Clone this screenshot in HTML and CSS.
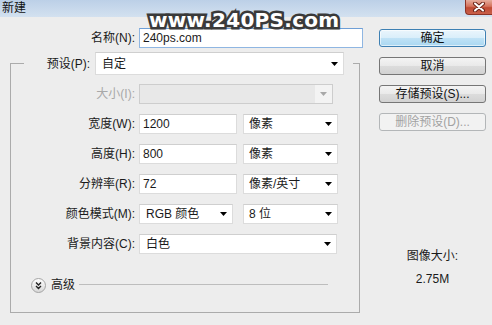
FILE: index.html
```html
<!DOCTYPE html>
<html lang="zh-CN">
<head>
<meta charset="utf-8">
<title>新建</title>
<link rel="stylesheet" href="styles.css">
</head>
<body>
<div class="dialog">
  <div class="titlebar">
    <span class="title">新建</span>
    <div class="close">
      <svg width="14" height="10" viewBox="0 0 14 10">
        <path d="M3 1.5 L11 8.5 M11 1.5 L3 8.5" stroke="#6a2418" stroke-width="4" stroke-linecap="round"/>
        <path d="M3 1.5 L11 8.5 M11 1.5 L3 8.5" stroke="#ffffff" stroke-width="2" stroke-linecap="round"/>
      </svg>
    </div>
  </div>
  <div class="content">
    <div class="main">
      <div class="name-row">
        <span class="lbl name-lbl">名称(N):</span>
        <div class="field focus name-input">240ps.com</div>
      </div>
      <fieldset class="group">
        <legend class="preset">
          <span class="lbl preset-lbl">预设(P):</span>
          <div class="field select preset-select"><span>自定</span><svg class="arrow" width="7" height="4" viewBox="0 0 7 4"><polygon points="0,0 7,0 3.5,4" fill="#000"/></svg></div>
        </legend>
        <div class="fields">
          <span class="lbl disabled">大小(I):</span>
          <div class="ctrls">
            <div class="field select dis-select"><span></span><span class="dis-arrow"><svg width="7" height="4" viewBox="0 0 7 4"><polygon points="0,0 7,0 3.5,4" fill="#a8a8a8"/></svg></span></div>
          </div>

          <span class="lbl">宽度(W):</span>
          <div class="ctrls gap6">
            <div class="field num">1200</div>
            <div class="field select unit"><span>像素</span><svg class="arrow" width="7" height="4" viewBox="0 0 7 4"><polygon points="0,0 7,0 3.5,4" fill="#000"/></svg></div>
          </div>

          <span class="lbl">高度(H):</span>
          <div class="ctrls gap6">
            <div class="field num">800</div>
            <div class="field select unit"><span>像素</span><svg class="arrow" width="7" height="4" viewBox="0 0 7 4"><polygon points="0,0 7,0 3.5,4" fill="#000"/></svg></div>
          </div>

          <span class="lbl">分辨率(R):</span>
          <div class="ctrls gap6">
            <div class="field num">72</div>
            <div class="field select unit"><span>像素/英寸</span><svg class="arrow" width="7" height="4" viewBox="0 0 7 4"><polygon points="0,0 7,0 3.5,4" fill="#000"/></svg></div>
          </div>

          <span class="lbl">颜色模式(M):</span>
          <div class="ctrls gap10">
            <div class="field select mode"><span>RGB 颜色</span><svg class="arrow" width="7" height="4" viewBox="0 0 7 4"><polygon points="0,0 7,0 3.5,4" fill="#000"/></svg></div>
            <div class="field select unit"><span>8 位</span><svg class="arrow" width="7" height="4" viewBox="0 0 7 4"><polygon points="0,0 7,0 3.5,4" fill="#000"/></svg></div>
          </div>

          <span class="lbl">背景内容(C):</span>
          <div class="ctrls">
            <div class="field select bg"><span>白色</span><svg class="arrow" width="7" height="4" viewBox="0 0 7 4"><polygon points="0,0 7,0 3.5,4" fill="#000"/></svg></div>
          </div>
        </div>
        <div class="advanced">
          <svg class="adv-icon" width="15" height="15" viewBox="0 0 15 15">
            <defs>
              <linearGradient id="g" x1="0" y1="0" x2="0" y2="1">
                <stop offset="0" stop-color="#ffffff"/>
                <stop offset="1" stop-color="#d6d6d6"/>
              </linearGradient>
            </defs>
            <circle cx="7.5" cy="7.5" r="7" fill="url(#g)" stroke="#a4a4a4"/>
            <path d="M5 4.5 L7.5 7 L10 4.5 M5 8 L7.5 10.5 L10 8" fill="none" stroke="#222" stroke-width="1.4"/>
          </svg>
          <span class="adv-text">高级</span>
          <span class="adv-line"></span>
        </div>
      </fieldset>
    </div>
    <div class="side">
      <div class="btn primary">确定</div>
      <div class="btn">取消</div>
      <div class="btn">存储预设(S)...</div>
      <div class="btn off">删除预设(D)...</div>
      <div class="info">
        <div class="info-title">图像大小:</div>
        <div class="info-val">2.75M</div>
      </div>
    </div>
  </div>
  <div class="watermark">www.240PS.com</div>
</div>
</body>
</html>
```

FILE: styles.css
```css
* { box-sizing: border-box; }
html, body { margin: 0; padding: 0; }
body {
  width: 492px;
  height: 325px;
  overflow: hidden;
  background: #ededed;
  font-family: "Liberation Sans", "Noto Sans CJK SC", sans-serif;
  font-size: 12px;
  color: #1a1a1a;
}
.dialog {
  position: relative;
  width: 492px;
  height: 325px;
  background: #ededed;
}
.titlebar {
  height: 17px;
  background: linear-gradient(#bcd0e7, #d3e1f0);
  display: flex;
  justify-content: space-between;
  align-items: flex-start;
}
.title {
  padding: 2px 0 0 2px;
  line-height: 13px;
  font-size: 12px;
  color: #111;
}
.close {
  width: 27px;
  height: 15px;
  border: 1px solid #8c3326;
  border-top: 0;
  border-right: 0;
  border-radius: 0 0 0 4px;
  background: linear-gradient(#e6ad9d, #d4725c 45%, #c04a33 55%, #c9604a);
  display: flex;
  align-items: center;
  justify-content: center;
}
.content {
  display: flex;
  padding-top: 11px;
}
.main { width: 372px; }
.lbl {
  text-align: right;
  line-height: 20px;
  white-space: nowrap;
}
.name-row {
  display: flex;
  align-items: center;
  gap: 4px;
}
.name-lbl { width: 135px; }
.field {
  height: 20px;
  background: #fff;
  border: 1px solid #dcdcdc;
  border-top-color: #cfcfcf;
  display: flex;
  align-items: center;
  padding: 0 3px;
  line-height: 18px;
  white-space: nowrap;
}
.focus {
  border-color: #8fb6e2;
  border-top-color: #6f9fd6;
}
.name-input { width: 224px; }
.group {
  margin: 4px 0 0 10px;
  width: 350px;
  padding: 9px 0 19px 0;
  border: 1px solid #ababab;
  min-width: 0;
}
.preset {
  margin-left: 13px;
  padding: 0 9px 0 0;
  display: flex;
  align-items: center;
  gap: 5px;
}
.preset-lbl { width: 66px; }
.select {
  justify-content: space-between;
  padding: 0 5px 0 5px;
}
.preset-select {
  width: 249px;
  height: 23px;
  padding-left: 6px;
}
.arrow { flex: none; }
.fields {
  display: grid;
  grid-template-columns: 124px 1fr;
  column-gap: 4px;
  row-gap: 10px;
}
.ctrls { display: flex; }
.gap6 { gap: 6px; }
.gap10 { gap: 10px; }
.disabled { color: #a8a8a8; }
.dis-select {
  width: 194px;
  background: #e8e8e8;
  border-color: #cdcdcd;
  padding: 0;
}
.dis-arrow {
  width: 17px;
  height: 18px;
  background: #f3f3f3;
  display: flex;
  align-items: center;
  justify-content: center;
}
.num { width: 98px; }
.unit { width: 95px; }
.mode { width: 94px; padding-left: 6px; }
.bg { width: 198px; padding-left: 6px; }
.advanced {
  display: flex;
  align-items: center;
  margin: 24px 0 0 20px;
  height: 15px;
}
.adv-icon { flex: none; }
.adv-text {
  margin-left: 5px;
  line-height: 15px;
}
.adv-line {
  margin-left: 4px;
  width: 249px;
  height: 1px;
  background: #bdbdbd;
  margin-top: -3px;
}
.side {
  margin-left: 7px;
  padding-top: 1px;
  width: 107px;
  display: flex;
  flex-direction: column;
  gap: 10px;
}
.btn {
  height: 18px;
  width: 107px;
  border: 1px solid #767676;
  border-radius: 3px;
  background: linear-gradient(#f4f4f4, #e9e9e9 50%, #dcdcdc 52%, #d2d2d2);
  text-align: center;
  line-height: 16px;
  color: #111;
}
.btn.primary {
  border-color: #3e80b3;
  background: linear-gradient(#eaf5fc, #d9eefa 50%, #bfe2f6 52%, #a9d7f1);
  box-shadow: inset 0 0 0 1px rgba(255,255,255,0.6);
}
.btn.off {
  border-color: #b3b6b8;
  background: #f2f2f2;
  color: #a2a2a2;
}
.info {
  margin-top: 107px;
  text-align: center;
  line-height: 16px;
}
.info-val { margin-top: 7px; }
.watermark {
  position: absolute;
  left: 149px;
  top: 10px;
  font-family: "DejaVu Sans", sans-serif;
  font-weight: bold;
  font-size: 20px;
  line-height: 20px;
  color: #fff;
  -webkit-text-stroke: 5px #3a3a3a;
  stroke-linejoin: round;
  paint-order: stroke fill;
  letter-spacing: 0.3px;
}
```
